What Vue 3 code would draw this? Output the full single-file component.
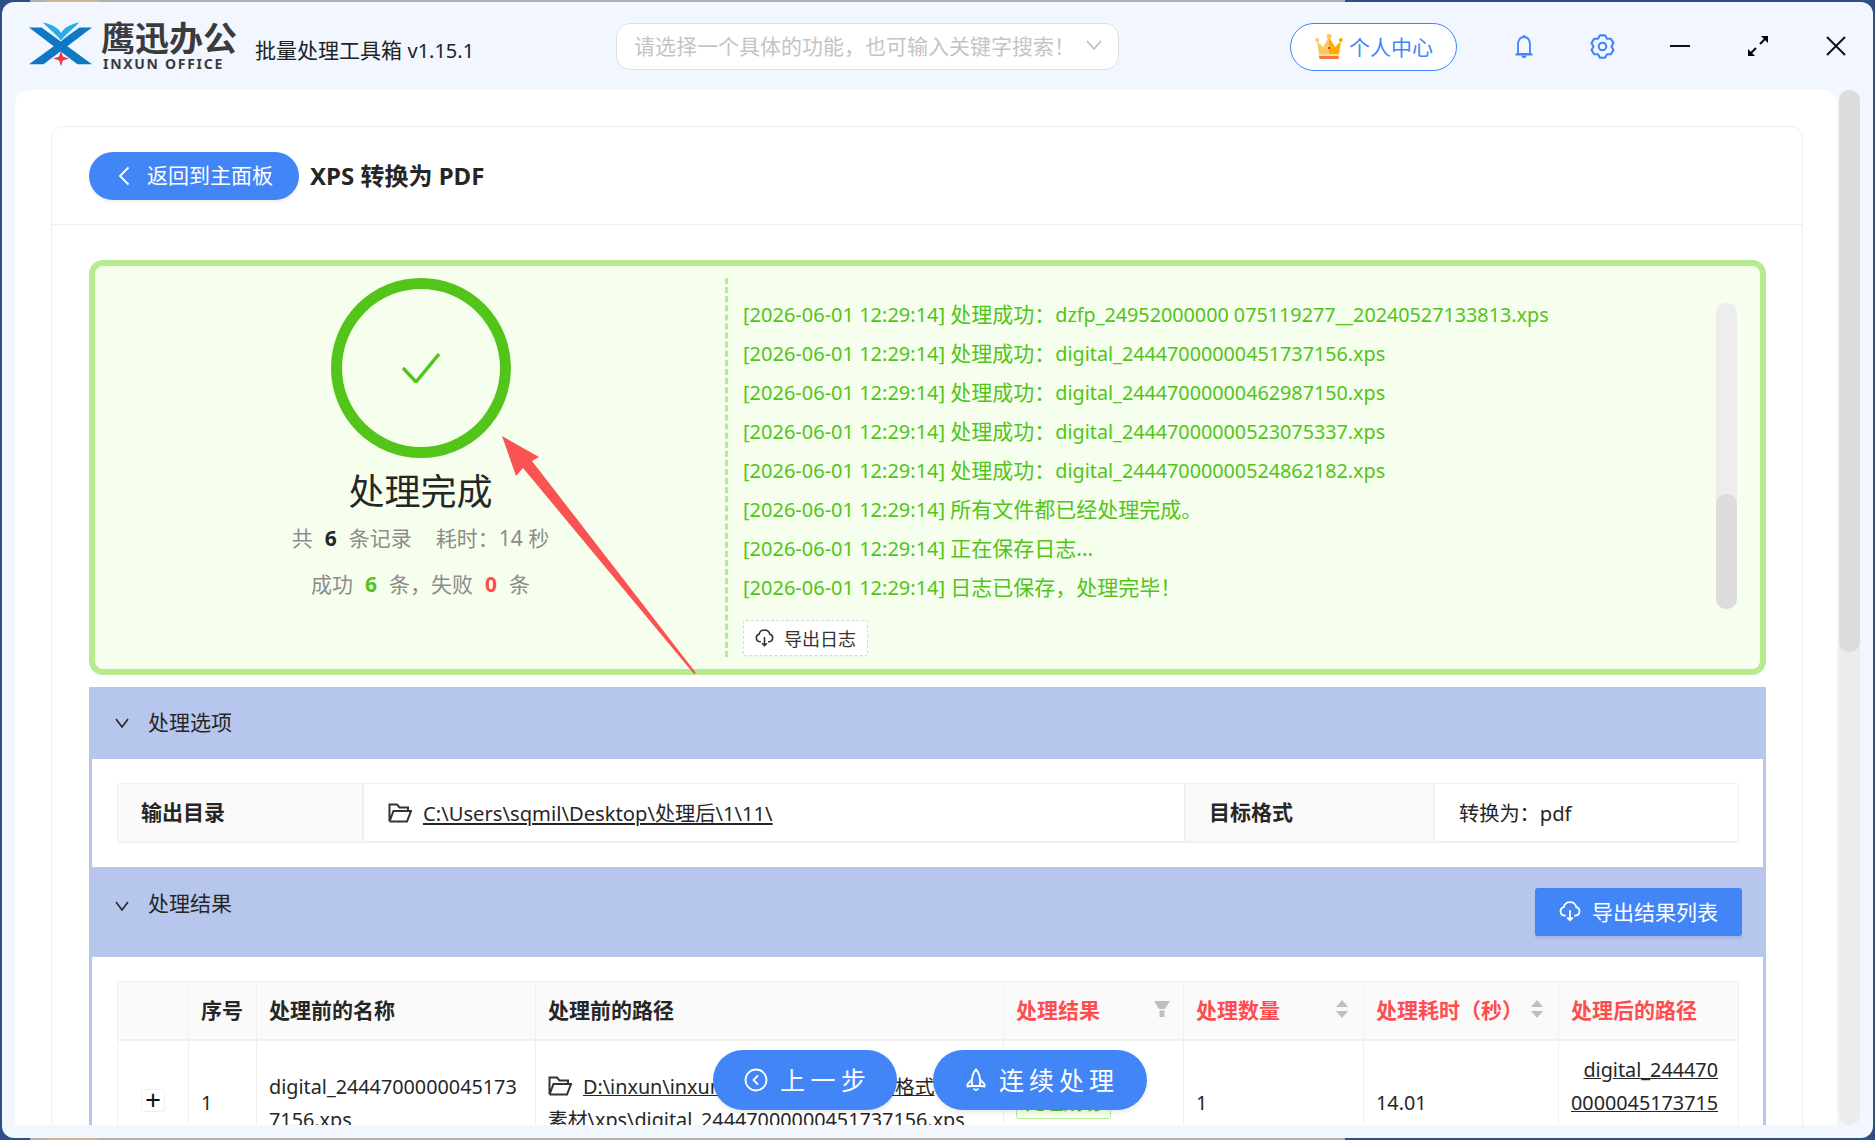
<template>
  <div class="page">
    <div class="window">
      <header class="topbar">
        <div class="brand">
          <svg class="brand-mark" viewBox="0 0 66 46">
            <polygon points="0,6 13,6 65,44 50,44" fill="#0e78c4" />
            <polygon points="65,6 52,6 0,44 15,44" fill="#0e78c4" />
            <path d="M13 0 C24 2 30 6 33 11 C36 6 42 2 53 0 C47 7 39 12 33 20 C27 12 19 7 13 0Z" fill="#2cace6" stroke="#f2f6ff" stroke-width="1" />
            <path d="M33 30 L35 36 L41 38 L35 40 L33 46 L31 40 L25 38 L31 36Z" fill="#ee3a43" />
          </svg>
          <div class="brand-text">
            <div class="brand-cn">鹰迅办公</div>
            <div class="brand-en">INXUN OFFICE</div>
          </div>
        </div>
        <div class="subtitle">批量处理工具箱 <span class="version">v1.15.1</span></div>
        <div class="search">
          <span>请选择一个具体的功能，也可输入关键字搜索！</span>
          <svg class="search-arrow" viewBox="0 0 16 10"><path d="M1 1 L8 9 L15 1" /></svg>
        </div>
        <div class="user-btn">
          <svg class="crown" viewBox="0 0 28 25">
            <path d="M2 7 L8 13 L14 3 V21 H4Z" fill="#fcc75c" />
            <path d="M26 7 L20 13 L14 3 V21 H24Z" fill="#ffae00" />
            <circle cx="2.2" cy="6" r="2" fill="#fcc75c" />
            <circle cx="14" cy="2.5" r="2.5" fill="#fcc75c" />
            <circle cx="25.8" cy="6" r="2" fill="#ffae00" />
            <rect x="4" y="20" width="20" height="2" fill="#fde0a0" />
            <path d="M4 22 H24 L23.5 25 H4.5Z" fill="#f9793a" />
            <rect x="13" y="13" width="2" height="2" fill="#e8352e" />
          </svg>
          <span>个人中心</span>
        </div>
        <div class="tool tool-first">
          <svg class="ico-bell" viewBox="0 0 20 25">
            <path d="M10 3 C5.5 3 4 7 4 11 V20 H16 V11 C16 7 14.5 3 10 3Z" />
            <path d="M1.5 20.5 H18.5" />
            <path d="M10 1 V3" />
            <path d="M8 21.5 Q10 25 12 21.5" />
          </svg>
        </div>
        <div class="tool">
          <svg class="ico-gear" viewBox="0 0 24 24">
            <path :d="gearPath" />
            <circle cx="12" cy="12" r="3.6" />
          </svg>
        </div>
        <div class="tool"><div class="minus"></div></div>
        <div class="tool">
          <svg class="ico-expand" viewBox="0 0 20 20">
            <path d="M3 17 L8 12 M12 8 L17 3" stroke="#000" stroke-width="2" />
            <polygon points="0,20 0,13 7,20" fill="#000" />
            <polygon points="20,0 13,0 20,7" fill="#000" />
          </svg>
        </div>
        <div class="tool">
          <svg class="ico-close" viewBox="0 0 20 20"><path d="M1 1 L19 19 M19 1 L1 19" /></svg>
        </div>
      </header>

      <div class="main">
        <div class="panel">
          <div class="card">
            <div class="card-head">
              <div class="back-btn">
                <svg class="back-arrow" viewBox="0 0 12 20"><path d="M10.5 1.5 L2 10 L10.5 18.5" /></svg>
                <span class="lift">返回到主面板</span>
              </div>
              <div class="card-title lift">XPS 转换为 PDF</div>
            </div>
            <div class="card-body">
              <div class="result">
                <div class="result-left">
                  <div class="ring">
                    <svg class="ring-check" viewBox="0 0 38 30"><path d="M1 15 L14 29 L37 1" /></svg>
                  </div>
                  <div class="done-title">处理完成</div>
                  <div class="stat stat-one">
                    共<b class="num">6</b>条记录<span class="stat-gap"></span>耗时：14 秒
                  </div>
                  <div class="stat stat-two">
                    成功<b class="num num-ok">6</b>条，失败<b class="num num-bad">0</b>条
                  </div>
                </div>
                <div class="result-right">
                  <div class="log-list">
                    <div v-for="(line, i) in logLines" :key="i" class="log-line">
                      [2026-06-01 12:29:14] <span class="log-msg">{{ line.msg }}</span><span class="log-file">{{ line.file }}</span>
                    </div>
                    <div class="log-btn">
                      <svg class="ico-cloud" viewBox="0 0 24 24">
                        <path d="M7.5 16 H6 A4.8 4.8 0 0 1 5.2 6.6 A7 7 0 0 1 18.8 6.6 A4.8 4.8 0 0 1 18 16 H16.5" />
                        <path d="M12 10 V21 M9 18 L12 21 L15 18" />
                      </svg>
                      <span>导出日志</span>
                    </div>
                  </div>
                  <div class="log-scroll"><div class="log-thumb"></div></div>
                </div>
              </div>

              <div class="sec-head sec-head-one">
                <svg class="sec-arrow" viewBox="0 0 14 10"><path d="M1 1 L7 9 L13 1" /></svg>
                <span class="sec-title">处理选项</span>
              </div>
              <div class="sec-body sec-body-one">
                <div class="opt-table">
                  <div class="opt-label">输出目录</div>
                  <div class="opt-value">
                    <svg class="ico-folder" viewBox="0 0 24 20">
                      <path d="M1.5 18.5 V1.5 H9 L11.5 4.5 H20 V8 M1.5 18.5 H19 L23 8 H5.5 L1.5 18.5" />
                    </svg>
                    <span class="link">C:\Users\sqmil\Desktop\处理后\1\11\</span>
                  </div>
                  <div class="opt-label">目标格式</div>
                  <div class="opt-value">转换为：pdf</div>
                </div>
              </div>

              <div class="sec-head sec-head-two">
                <svg class="sec-arrow" viewBox="0 0 14 10"><path d="M1 1 L7 9 L13 1" /></svg>
                <span>处理结果</span>
                <div class="export-btn">
                  <svg class="ico-cloud ico-cloud-white" viewBox="0 0 24 24">
                    <path d="M7.5 16 H6 A4.8 4.8 0 0 1 5.2 6.6 A7 7 0 0 1 18.8 6.6 A4.8 4.8 0 0 1 18 16 H16.5" />
                    <path d="M12 10 V21 M9 18 L12 21 L15 18" />
                  </svg>
                  <span>导出结果列表</span>
                </div>
              </div>
              <div class="sec-body sec-body-two">
                <table class="res-table">
                  <colgroup>
                    <col v-for="w in colWidths" :key="w.id" :style="{ width: w.px + 'px' }" />
                  </colgroup>
                  <thead>
                    <tr>
                      <th></th>
                      <th>序号</th>
                      <th>处理前的名称</th>
                      <th>处理前的路径</th>
                      <th class="red">
                        <div class="th-flex">
                          处理结果
                          <svg class="ico-filter" viewBox="0 0 16 16"><path d="M0 0 H16 L11 8 H5Z M5.5 9.5 H10.5 V16 H5.5Z" /></svg>
                        </div>
                      </th>
                      <th class="red">
                        <div class="th-flex">
                          处理数量
                          <svg class="ico-sort" viewBox="0 0 12 18"><path d="M6 0 L12 7 H0Z M0 11 H12 L6 18Z" /></svg>
                        </div>
                      </th>
                      <th class="red">
                        <div class="th-flex">
                          处理耗时（秒）
                          <svg class="ico-sort" viewBox="0 0 12 18"><path d="M6 0 L12 7 H0Z M0 11 H12 L6 18Z" /></svg>
                        </div>
                      </th>
                      <th class="red">处理后的路径</th>
                    </tr>
                  </thead>
                  <tbody>
                    <tr>
                      <td class="td-center"><div class="plus">+</div></td>
                      <td>1</td>
                      <td>digital_2444700000045173<br />7156.xps</td>
                      <td>
                        <svg class="ico-folder" viewBox="0 0 24 20">
                          <path d="M1.5 18.5 V1.5 H9 L11.5 4.5 H20 V8 M1.5 18.5 H19 L23 8 H5.5 L1.5 18.5" />
                        </svg>
                        <span class="link">D:\inxun\inxun\测试文件\转换文档格式</span><br />
                        <span class="link">素材\xps\digital_24447000000451737156.xps</span>
                      </td>
                      <td><span class="tag">处理成功</span></td>
                      <td>1</td>
                      <td>14.01</td>
                      <td class="td-right">
                        <span class="link">digital_244470</span><br />
                        <span class="link">0000045173715</span><br />
                        <span class="link">6.pdf</span>
                      </td>
                    </tr>
                  </tbody>
                </table>
              </div>
            </div>
          </div>
        </div>
        <div class="page-scroll"><div class="page-thumb"></div></div>
      </div>
    </div>

    <svg class="annot" viewBox="0 0 1875 1140">
      <polygon points="502,436 539,457 532,461 696,673 694,674 523,468 516,476" fill="#fb5252" />
    </svg>

    <div class="float-bar">
      <div class="float-btn float-prev">
        <svg class="ico-prev" viewBox="0 0 24 24">
          <circle cx="12" cy="12" r="10.5" />
          <path d="M14 7.5 L9.5 12 L14 16.5" />
        </svg>
        <span class="lift">上一步</span>
      </div>
      <div class="float-btn float-next">
        <svg class="ico-rocket" viewBox="0 0 20 24">
          <path d="M10 1.5 C6.5 5 6 9 6 13 V18 H14 V13 C14 9 13.5 5 10 1.5Z" />
          <path d="M6 11.5 L1.5 16 V18.5 L6 18 M14 11.5 L18.5 16 V18.5 L14 18" />
          <path d="M7.5 20.5 Q10 23.5 12.5 20.5" />
        </svg>
        <span class="lift">连续处理</span>
      </div>
    </div>
  </div>
</template>

<script setup>
const logLines = [
  { msg: '处理成功：', file: 'dzfp_24952000000 075119277__20240527133813.xps' },
  { msg: '处理成功：', file: 'digital_24447000000451737156.xps' },
  { msg: '处理成功：', file: 'digital_24447000000462987150.xps' },
  { msg: '处理成功：', file: 'digital_24447000000523075337.xps' },
  { msg: '处理成功：', file: 'digital_24447000000524862182.xps' },
  { msg: '所有文件都已经处理完成。', file: '' },
  { msg: '正在保存日志...', file: '' },
  { msg: '日志已保存，处理完毕！', file: '' }
]

const colWidths = [71, 68, 279, 468, 180, 180, 195, 180].map((px, id) => ({ id, px }))

// six lobes, same outline as the settings icon in the top bar
function makeGear() {
  const pt = (deg, r) => {
    const a = (deg * Math.PI) / 180
    return `${(12 + r * Math.cos(a)).toFixed(2)} ${(12 + r * Math.sin(a)).toFixed(2)}`
  }
  let d = ''
  for (let k = 0; k < 6; k++) {
    const a = k * 60 - 90
    d += `${k ? 'L' : 'M'}${pt(a - 30, 8.6)} L${pt(a - 13, 11)} L${pt(a + 13, 11)} `
  }
  return d + 'Z'
}
const gearPath = makeGear()
</script>

<style scoped>
.page {
  position: relative;
  width: 1875px;
  height: 1140px;
  box-sizing: border-box;
  padding: 2px;
  overflow: hidden;
  background: linear-gradient(90deg, #2d4f85 0 30px, #b0b0b0 30px 45px, #c9b58f 45px 100px, #b0b0b0 100px 1345px, #2d4f85 1345px);
  font-family: "Noto Sans", "Noto Sans CJK SC", sans-serif;
  color: #262626;
}
.window {
  display: flex;
  flex-direction: column;
  width: 1871px;
  height: 1136px;
  background: #f2f6ff;
  border-radius: 12px;
  overflow: hidden;
}
/* Noto sits a little lower than the original text */
.lift {
  margin-bottom: 3px;
}

/* top bar */
.topbar {
  display: flex;
  align-items: center;
  flex: none;
  height: 88px;
  padding-left: 26px;
}
.brand {
  display: flex;
  flex: none;
  width: 209px;
  padding-left: 1px;
  box-sizing: border-box;
  gap: 8px;
}
.brand-mark {
  width: 66px;
  height: 46px;
}
.brand-cn {
  font-size: 34px;
  font-weight: 700;
  line-height: 34px;
  color: #3b3b3b;
  white-space: nowrap;
}
.brand-en {
  font-size: 14px;
  font-weight: 700;
  line-height: 14px;
  margin: 2px 0 0 2px;
  letter-spacing: 1.7px;
  color: #3b3b3b;
  white-space: nowrap;
}
.subtitle {
  flex: none;
  width: 361px;
  margin: 6px 0 0 18px;
  font-size: 21px;
  white-space: nowrap;
  color: #222;
}
.version {
  font-size: 20px;
}
.search {
  display: flex;
  align-items: center;
  justify-content: space-between;
  flex: none;
  box-sizing: border-box;
  width: 503px;
  height: 47px;
  padding: 0 16px 2px 17px;
  background: #fff;
  border: 1px solid #dcdfe6;
  border-radius: 14px;
  font-size: 21px;
  color: #c4c4c4;
  white-space: nowrap;
}
.search-arrow {
  width: 16px;
  height: 10px;
  fill: none;
  stroke: #bdbdbd;
  stroke-width: 1.6;
}
.user-btn {
  display: flex;
  align-items: center;
  flex: none;
  box-sizing: border-box;
  width: 167px;
  height: 48px;
  margin: 2px 0 0 171px;
  padding: 0 0 2px 24px;
  gap: 6px;
  background: #fff;
  border: 1px solid #4285f7;
  border-radius: 24px;
  font-size: 21px;
  color: #4285f7;
  white-space: nowrap;
}
.crown {
  width: 28px;
  height: 25px;
  flex: none;
}
.tool {
  display: flex;
  align-items: center;
  justify-content: center;
  flex: none;
  width: 78px;
  height: 48px;
}
.tool-first {
  margin-left: 28px;
}
.ico-bell {
  width: 20px;
  height: 25px;
  fill: none;
  stroke: #4285f7;
  stroke-width: 1.8;
}
.ico-gear {
  width: 25px;
  height: 25px;
  fill: none;
  stroke: #4285f7;
  stroke-width: 2;
  stroke-linejoin: round;
}
.minus {
  width: 20px;
  height: 2px;
  background: #111;
}
.ico-expand {
  width: 20px;
  height: 20px;
}
.ico-close {
  width: 20px;
  height: 20px;
  fill: none;
  stroke: #111;
  stroke-width: 2;
}

/* main area */
.main {
  display: flex;
  flex: none;
  height: 1035px;
  padding-left: 13px;
  gap: 2px;
}
.panel {
  box-sizing: border-box;
  flex: none;
  width: 1822px;
  height: 1035px;
  padding: 36px 34px 0 36px;
  background: #fff;
  border-radius: 14px 14px 0 0;
  overflow: hidden;
}
.page-scroll {
  flex: none;
  width: 21px;
  height: 1035px;
  background: #ececec;
  border-radius: 10px;
}
.page-thumb {
  height: 562px;
  background: #dcdcdc;
  border-radius: 10px;
}
.card {
  border: 1px solid #eeeeee;
  border-radius: 12px;
}
.card-head {
  display: flex;
  align-items: center;
  height: 97px;
  padding-left: 37px;
  gap: 11px;
  border-bottom: 1px solid #eeeeee;
}
.back-btn {
  display: flex;
  align-items: center;
  box-sizing: border-box;
  width: 210px;
  height: 48px;
  padding-left: 29px;
  gap: 17px;
  background: #4285f7;
  border-radius: 24px;
  box-shadow: 0 3px 3px rgba(0, 0, 0, 0.05);
  font-size: 21px;
  color: #fff;
  white-space: nowrap;
}
.back-arrow {
  width: 12px;
  height: 20px;
  fill: none;
  stroke: #fff;
  stroke-width: 1.8;
}
.card-title {
  font-size: 24px;
  font-weight: 700;
  color: #262626;
  white-space: nowrap;
}
.card-body {
  padding: 35px 36px 0 37px;
}

/* finished box */
.result {
  display: flex;
  box-sizing: border-box;
  height: 415px;
  background: #f6ffed;
  border: 6px solid #b7eb8f;
  border-radius: 14px;
}
.result-left {
  display: flex;
  flex-direction: column;
  align-items: center;
  flex: none;
  box-sizing: border-box;
  width: 630px;
  padding: 12px 0 0 21px;
}
.ring {
  display: flex;
  align-items: center;
  justify-content: center;
  flex: none;
  box-sizing: border-box;
  width: 180px;
  height: 180px;
  border: 11px solid #52c41a;
  border-radius: 50%;
}
.ring-check {
  width: 38px;
  height: 30px;
  fill: none;
  stroke: #52c41a;
  stroke-width: 3.4;
}
.done-title {
  margin-top: 7px;
  font-size: 36px;
  line-height: 54px;
  color: #262626;
}
.stat {
  font-size: 21px;
  line-height: 30px;
  color: #8c8c8c;
  white-space: nowrap;
}
.stat-one {
  margin-top: 4px;
}
.stat-two {
  margin-top: 16px;
}
.stat-gap {
  display: inline-block;
  width: 24px;
}
.num {
  margin: 0 12px;
  font-weight: 700;
  color: #262626;
}
.num-ok {
  color: #52c41a;
}
.num-bad {
  color: #ff4d4f;
}
.result-right {
  display: flex;
  flex: 1;
  margin: 12px 0 12px;
  border-left: 3px dashed #b7eb8f;
}
.log-list {
  flex: 1;
  padding: 17px 0 0 15px;
}
.log-line {
  height: 39px;
  font-size: 20px;
  line-height: 39px;
  color: #52c41a;
  white-space: nowrap;
}
.log-msg {
  font-size: 21px;
}
.log-file {
  font-size: 19.75px;
}
.log-btn {
  display: flex;
  align-items: center;
  box-sizing: border-box;
  width: 125px;
  height: 36px;
  margin-top: 13px;
  padding-left: 11px;
  gap: 10px;
  background: #fff;
  border: 1px dashed #d9d9d9;
  border-radius: 3px;
  box-shadow: 0 2px 0 rgba(0, 0, 0, 0.02);
  font-size: 18px;
  color: #333;
  white-space: nowrap;
}
.ico-cloud {
  width: 19px;
  height: 19px;
  fill: none;
  stroke: #333;
  stroke-width: 2;
  flex: none;
}
.ico-cloud-white {
  width: 22px;
  height: 22px;
  stroke: #fff;
}
.log-scroll {
  display: flex;
  align-items: flex-end;
  flex: none;
  width: 21px;
  height: 306px;
  margin: 25px 23px 0 0;
  background: #ededed;
  border-radius: 10px;
}
.log-thumb {
  width: 21px;
  height: 115px;
  background: #dcdcdc;
  border-radius: 10px;
}

/* collapse sections */
.sec-head {
  display: flex;
  align-items: center;
  gap: 19px;
  padding-left: 26px;
  background: #b6c6ed;
  font-size: 21px;
  color: #262626;
}
.sec-head-one {
  height: 72px;
  margin-top: 12px;
}
.sec-title {
  margin-bottom: 5px;
}
.sec-head-two {
  align-items: flex-start;
  height: 90px;
  padding-top: 20px;
  box-sizing: border-box;
  line-height: 32px;
}
.sec-head-two .sec-arrow {
  margin-top: 14px;
}
.sec-arrow {
  width: 14px;
  height: 10px;
  fill: none;
  stroke: #262626;
  stroke-width: 1.6;
  flex: none;
}
.sec-body {
  border: solid #b6c6ed;
  border-width: 0 3px;
  background: #fff;
  padding: 24px 24px 0 25px;
}
.sec-body-one {
  height: 108px;
  box-sizing: border-box;
}
.opt-table {
  display: grid;
  grid-template-columns: 246px 822px 249px 305px;
  height: 60px;
  box-sizing: border-box;
  border: 1px solid #f0f0f0;
  border-bottom-width: 2px;
  border-radius: 3px;
  font-size: 20.2px;
}
.opt-label {
  display: flex;
  align-items: center;
  padding: 0 0 3px 23px;
  background: #fafafa;
  border: solid #f0f0f0;
  border-width: 0 2px 0 0;
  font-size: 21px;
  font-weight: 700;
}
.opt-value {
  display: flex;
  align-items: center;
  padding-left: 24px;
  gap: 11px;
  border-right: 2px solid #f0f0f0;
  white-space: nowrap;
}
.opt-value:last-child {
  border-right: 0;
}
.ico-folder {
  width: 24px;
  height: 20px;
  fill: none;
  stroke: #333;
  stroke-width: 2;
  flex: none;
}
.link {
  text-decoration: underline;
  white-space: nowrap;
}
.export-btn {
  display: flex;
  align-items: center;
  box-sizing: border-box;
  width: 207px;
  height: 48px;
  margin: 1px 24px 0 auto;
  padding-left: 24px;
  gap: 11px;
  background: #4285f7;
  border-radius: 3px;
  box-shadow: 0 3px 2px rgba(0, 0, 0, 0.08);
  color: #fff;
  white-space: nowrap;
}

/* result table */
.res-table {
  width: 1621px;
  table-layout: fixed;
  border-collapse: separate;
  border-spacing: 0;
  font-size: 19.8px;
  border-top: 1px solid #f0f0f0;
  border-left: 1px solid #f0f0f0;
  border-radius: 3px 3px 0 0;
}
.res-table th {
  box-sizing: border-box;
  height: 59px;
  padding: 0 12px 3px;
  background: #fafafa;
  border-right: 1px solid #f0f0f0;
  border-bottom: 2px solid #f0f0f0;
  font-size: 21px;
  font-weight: 700;
  text-align: left;
  white-space: nowrap;
}
.res-table td {
  padding: 12px 12px 16px;
  border-right: 1px solid #f0f0f0;
  line-height: 33px;
  white-space: nowrap;
}
.res-table .td-center {
  text-align: center;
  padding: 12px 0 16px;
}
.res-table .td-right {
  text-align: right;
  padding-right: 20px;
}
.res-table th.red {
  color: #ff4d4f;
}
.th-flex {
  display: flex;
  align-items: center;
  justify-content: space-between;
}
.ico-filter {
  width: 16px;
  height: 16px;
  fill: #bfbfbf;
  margin-right: 1px;
}
.ico-sort {
  width: 12px;
  height: 18px;
  fill: #bfbfbf;
  margin-right: 3px;
}
.plus {
  display: inline-block;
  width: 24px;
  height: 23px;
  border: 1px solid #f0f0f0;
  border-radius: 3px;
  font-size: 28px;
  line-height: 19px;
  box-sizing: border-box;
  color: #111;
}
.tag {
  display: inline-block;
  box-sizing: border-box;
  width: 95px;
  height: 32px;
  background: #f6ffed;
  border: 1px solid #b7eb8f;
  border-radius: 3px;
  font-size: 19px;
  line-height: 30px;
  text-align: center;
  color: #52c41a;
}
.res-table td .ico-folder {
  vertical-align: -2px;
  margin-right: 11px;
}

/* overlays */
.annot {
  position: absolute;
  left: 0;
  top: 0;
  width: 1875px;
  height: 1140px;
  pointer-events: none;
}
.float-bar {
  position: absolute;
  left: 713px;
  top: 1050px;
  display: flex;
  gap: 36px;
}
.float-btn {
  display: flex;
  align-items: center;
  box-sizing: border-box;
  height: 60px;
  background: #4285f7;
  border-radius: 30px;
  box-shadow: 0 3px 4px rgba(0, 0, 0, 0.08);
  font-size: 25px;
  color: #fff;
  white-space: nowrap;
}
.float-prev {
  width: 184px;
  padding-left: 31px;
  gap: 12px;
  letter-spacing: 5.5px;
}
.float-next {
  width: 214px;
  padding-left: 33px;
  gap: 13px;
  letter-spacing: 5px;
}
.ico-prev {
  width: 24px;
  height: 24px;
  fill: none;
  stroke: #fff;
  stroke-width: 1.8;
  flex: none;
}
.ico-rocket {
  width: 20px;
  height: 24px;
  fill: none;
  stroke: #fff;
  stroke-width: 1.8;
  flex: none;
}
</style>
